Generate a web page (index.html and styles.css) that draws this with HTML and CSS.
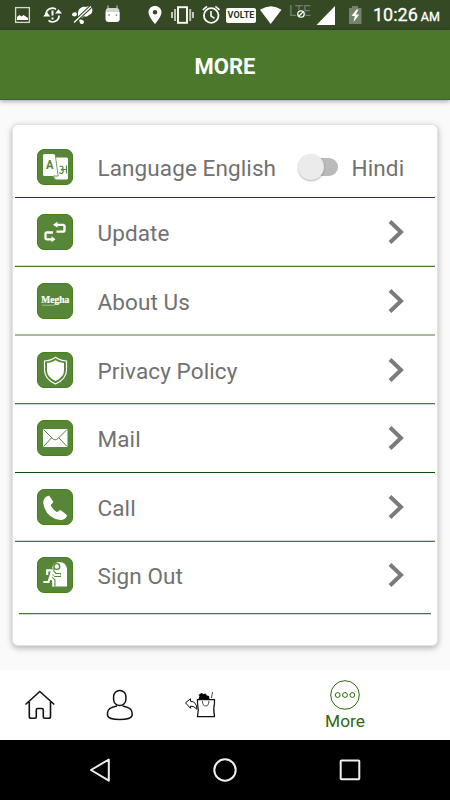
FILE: index.html
```html
<!DOCTYPE html>
<html lang="en">
<head>
<meta charset="utf-8">
<title>More</title>
<link rel="stylesheet" href="styles.css">
</head>
<body>
<div class="screen">
  <div class="status">
    <svg width="40" height="30" viewBox="0 0 40 30"><rect x="15.600" y="7.600" width="13.800" height="14.800" fill="none" stroke="#d5dbcf" stroke-width="1.300"/><path d="M17 20v-3l2.500-2 2 1.500 2-1.500 4.500 3v2z" fill="#fff"/></svg>
    <svg width="28" height="30" viewBox="40 0 28 30"><g fill="none" stroke="#fff" stroke-width="1.700"><path d="M46 14a6.300 6.300 0 0 1 10-4.600M59 15.500a6.300 6.300 0 0 1-10.500 4.800" /><path d="M52.500 10.500v5M52.500 17.500v2" stroke-width="2"/></g><path d="M55 13.500h7l-3.600-4.300zM43.200 16.500h7.200l-3.700-4.500z" fill="#fff"/></svg>
    <svg width="32" height="30" viewBox="68 0 32 30"><path d="M78 12c1-5 6-6 8-5 2-1 5-1 6 1 1 3 0 6-3 7-2 2-4 2-5 1l-2 2-4-1zM73 13c1-1 4-1 4 1s-2 3-4 2-1-2 0-3zM79 20c2-1 5 0 5 2s-3 3-4 1z" fill="#fff"/><path d="M74 22.500 91 6.500" stroke="#364925" stroke-width="3.500"/><path d="M74 22.500 91 6.500" stroke="#fff" stroke-width="1.300"/></svg>
    <svg width="40" height="30" viewBox="100 0 40 30"><path d="M108 5.500v4M117 5.500v4" stroke="#b8c0b0" stroke-width="1.200"/><path d="M105.500 12q0-4 3-4h8q3 0 3 4z" fill="#d2d7cd"/><path d="M105.500 12h14.200v7q0 3-3 3H109q-3.500 0-3.500-3z" fill="#fff"/><circle cx="109" cy="15" r=".8" fill="#536348"/><circle cx="116.400" cy="15" r=".8" fill="#536348"/></svg>
    <svg width="29" height="30" viewBox="140 0 29 30"><path fill-rule="evenodd" d="M155 6c-3.700 0-6.500 2.700-6.500 6.300C148.500 17 155 24 155 24s6.500-7 6.500-11.700C161.500 8.700 158.700 6 155 6zm0 4a2.300 2.300 0 1 1 0 4.600 2.300 2.300 0 0 1 0-4.600z" fill="#fff"/></svg>
    <svg width="29" height="30" viewBox="169 0 29 30"><rect x="178" y="7.200" width="9" height="15.600" fill="none" stroke="#fff" stroke-width="1.900"/><path d="M175 9v12M190.200 9v12" stroke="#b9c2b1" stroke-width="2"/><path d="M172 12v6M193 12v6" stroke="#fff" stroke-width="1.400"/></svg>
    <svg width="27" height="30" viewBox="198 0 27 30"><circle cx="211.200" cy="15.500" r="7.300" fill="none" stroke="#fff" stroke-width="1.800"/><path d="M211 11v5l3.500 2.300M202.800 9.800l4.200-3.500M219.600 9.800l-4.200-3.500" fill="none" stroke="#fff" stroke-width="1.600"/></svg>
    <span class="volte">VOLTE</span>
    <svg width="29" height="30" viewBox="256 0 29 30"><path d="M260 9.800q11-7.200 21.500 0L270.700 24z" fill="#fff"/></svg>
    <svg width="28" height="30" viewBox="285 0 28 30"><text x="289" y="15.500" class="lte">LTE</text><circle cx="301" cy="14" r="4.600" fill="#364925"/><circle cx="301" cy="14" r="3.200" fill="none" stroke="#fff" stroke-width="1.300"/><path d="m299 16 4-4" stroke="#fff" stroke-width="1.200"/></svg>
    <svg width="29" height="30" viewBox="313 0 29 30"><path d="M335 6v19h-18.500z" fill="#fff"/></svg>
    <svg width="31" height="30" viewBox="342 0 31 30"><path d="M349 8h3V6h6v2h3.500v16H349z" fill="#76836b"/><path d="m356.500 9.500-5 6.500h3.300l-1.300 6 5.800-7.500h-3.500l2.700-5z" fill="#fff"/></svg>
    <div class="clock">10:26<span>AM</span></div>
  </div>
  <header class="header">MORE</header>
  <main class="main">
    <section class="card">
      <div class="row row-first">
        <svg class="icon" viewBox="1 1 34 34"><path d="M17 8.500h12.500q1.500 0 1.500 1.500v19q0 1.500-1.500 1.500H18l-2-3z" fill="#fff"/><path d="M7.500 5H16q2 0 2.400 2l2.800 20H7.500q-1.500 0-1.500-1.500v-19Q6 5 7.500 5z" fill="#fff"/><path d="m18.400 7 2.800 20h-4.700l2 3.500" fill="none" stroke="#578638" stroke-width=".8"/><text x="9" y="19.500" class="letter" textLength="7.500" lengthAdjust="spacingAndGlyphs">A</text><path d="M22.500 17.500q4-1 3.500 1.700-.2 1.500-2.200 1.500 3 0 2.300 2.300-.7 2.200-3.800.8M26 20.500h3M29.500 16.500v8" fill="none" stroke="#578638" stroke-width="1.200"/></svg>
        <span class="label">Language English</span>
        <span class="switch"><i></i></span>
        <span class="label hindi">Hindi</span>
      </div>
      <div class="row above">
        <svg class="icon" viewBox="1 1 34 34"><g fill="none" stroke="#fff" stroke-width="2.300"><path d="M18.500 10.800H26q1.500 0 1.500 1.500v3.900q0 1.500-1.500 1.500h-6.500M16 18.500h-6q-1.500 0-1.500 1.500v3.800q0 1.500 1.500 1.500h6"/></g><path d="m16 10.800 4.500-3v6zM18.500 25.300l-4-3v6z" fill="#fff"/></svg>
        <span class="label">Update</span><svg class="chev" viewBox="0 0 16 24"><path d="m2 1.500 11 10.500L2 22.500"/></svg>
      </div>
      <div class="row soft">
        <svg class="icon" viewBox="1 1 34 34"><text x="4.300" y="19.800" class="megha" textLength="28" lengthAdjust="spacingAndGlyphs">Megha</text><path d="M5 22.200h13" stroke="#d6e2cd" stroke-width=".6"/></svg>
        <span class="label">About Us</span><svg class="chev" viewBox="0 0 16 24"><path d="m2 1.500 11 10.500L2 22.500"/></svg>
      </div>
      <div class="row below">
        <svg class="icon" viewBox="1 1 34 34"><path d="M18.500 5.300q4.500 3.400 11 3.700v9q0 9-11 14-11-5-11-14V9q6.500-.3 11-3.700z" fill="none" stroke="#fff" stroke-width="1.200"/><path d="M18.500 8.200q4 2.600 8.500 2.900v7.400q0 6.500-8.500 10.500-8.500-4-8.500-10.500v-7.400q4.500-.3 8.500-2.900z" fill="#fff"/></svg>
        <span class="label">Privacy Policy</span><svg class="chev" viewBox="0 0 16 24"><path d="m2 1.500 11 10.500L2 22.500"/></svg>
      </div>
      <div class="row dark">
        <svg class="icon" viewBox="1 1 34 34"><path d="M6 9h24.500v18H6z" fill="#fff"/><path d="m6.500 9.500 8.500 8.500q3.200 3.600 6.500 0L30 9.500M6.500 26.500l8-8.500M30 26.500 22 18" fill="none" stroke="#578638" stroke-width="1"/></svg>
        <span class="label">Mail</span><svg class="chev" viewBox="0 0 16 24"><path d="m2 1.500 11 10.500L2 22.500"/></svg>
      </div>
      <div class="row above">
        <svg class="icon" viewBox="1 1 34 34"><path d="M7.500 9.500q2-3 4.700-2.700l3.800 5.400q.5 1-.5 2l-1.800 1.900q.8 3.500 6.300 7.100l2.200-1.700q1-.7 2 0l5.300 4.200q.7.800.3 1.500-2 4-6.500 3.800Q9 29 6.300 14.500q-.3-3 1.200-5z" fill="#fff"/></svg>
        <span class="label">Call</span><svg class="chev" viewBox="0 0 16 24"><path d="m2 1.500 11 10.500L2 22.500"/></svg>
      </div>
      <div class="row row-last below">
        <svg class="icon" viewBox="1 1 34 34"><path d="M15 29.500V12q1-7 7.500-7T30 12v17.500z" fill="#fff"/><circle cx="19.800" cy="9.500" r="2.900" fill="#fff" stroke="#578638" stroke-width="1.400"/><path d="M10 18v-4.500h5l-2.500 7L11 25H6M15 14l3.500 4H24M13.500 21l3 2.500v6" fill="none" stroke="#578638" stroke-width="4"/><path d="M10.200 18v-4.600h5L13 20.500 11.500 25H6.300M15 13.500l-1 7M15.500 15l2.500 3h5.500M13.500 21l2.800 2.500v6" fill="none" stroke="#fff" stroke-width="2.200"/></svg>
        <span class="label">Sign Out</span><svg class="chev" viewBox="0 0 16 24"><path d="m2 1.500 11 10.500L2 22.500"/></svg>
      </div>
    </section>
  </main>
  <nav class="tabs">
    <svg width="80" height="70" viewBox="0 670 80 70"><path d="M25.500 704.500 39.800 691.500 54.300 704.500M29.300 702v14.500q0 1.800 1.700 1.800h4q1.300 0 1.300-1.500V710q0-1.500 1.500-1.500h4q1.500 0 1.500 1.500v6.800q0 1.500 1.500 1.500h4q1.700 0 1.700-1.800V702" fill="none" stroke="#111" stroke-width="1.600"/></svg>
    <svg width="80" height="70" viewBox="80 670 80 70"><g fill="none" stroke="#111" stroke-width="1.500"><rect x="113.600" y="690.500" width="12.300" height="15" rx="6" /><path d="M117 706q-9.500 1.700-9.500 7v2.500q1 4 12.300 4t12.300-4V713q0-5.300-9.500-7"/></g></svg>
    <svg width="90" height="70" viewBox="160 670 90 70"><path d="M197.500 699.600h17v3.500q-1.500 6 0 13.500h-17q1.500-7 0-13.500z" fill="none" stroke="#111" stroke-width="1.200"/><path d="M202.500 701q0 5 3.200 5t3.200-5M211.500 698l1-6" fill="none" stroke="#333" stroke-width=".9"/><path d="m198.500 699 1-3-1-1 3-2 2 1 2-.5 1.500 2 2 .5.500 3z" fill="#000"/><path d="m185.500 702.800 5-4v2.500q6 0 6.500 8-3-3.500-6.500-3.200v2.200z" fill="none" stroke="#111"/></svg>
    <div class="tab-active">
      <svg width="32" height="32" viewBox="0 0 32 32"><g fill="none" stroke="#2d6a0b"><circle cx="16" cy="16" r="14.300"/><circle cx="8.700" cy="16" r="2.400"/><circle cx="16" cy="16" r="2.400"/><circle cx="23.300" cy="16" r="2.400"/></g></svg>
      <span>More</span>
    </div>
  </nav>
  <footer class="system">
    <svg width="450" height="60" viewBox="0 740 450 60"><g fill="none" stroke="#eee" stroke-width="2"><path d="M108.800 759.500v21.200L91 770z" stroke-linejoin="round"/><circle cx="225" cy="770" r="10.700"/><rect x="340.700" y="760.500" width="18.600" height="18.800" rx=".8"/></g></svg>
  </footer>
</div>
</body>
</html>
```
FILE: styles.css
```css
* { box-sizing: border-box; }
body { margin: 0; font-family: Roboto, "Liberation Sans", sans-serif; background: #fafafa; }
svg { display: block; flex: none; }
.screen { width: 450px; height: 800px; display: flex; flex-direction: column; overflow: hidden; }
.status { height: 30px; flex: none; background: #364925; display: flex; align-items: center; }
.volte { width: 30px; height: 15px; margin-left: 1px; flex: none; border-radius: 2px; background: #fff; color: #29391b; font-size: 9px; font-weight: 700; line-height: 15.500px; text-align: center; letter-spacing: .1px; }
.lte { font-size: 14px; fill: #728067; }
.clock { color: #fff; font-size: 18px; font-weight: 400; -webkit-text-stroke: .3px #fff; line-height: 33px; display: flex; align-items: baseline; white-space: nowrap; }
.clock span { font-size: 12.500px; margin-left: 3px; }
.header { height: 70px; flex: none; background: #4b782a; border-bottom: 1px solid #376a14; color: #fff; font-size: 22px; font-weight: 700; line-height: 73px; text-align: center; box-shadow: 0 1px 5px rgba(0,0,0,.4); }
.main { flex: 1; padding: 24px 12px 0; }
.card { width: 426px; height: 522px; padding: 0 2px; border-radius: 6px; background: #fff; border: 1px solid #e3e3e3; box-shadow: 0 2px 6px rgba(0,0,0,.3); }
.row { height: 69px; display: flex; align-items: center; padding: 0 31px 1px 22px; border-bottom: 1px solid #477b2b; }
.row-first { height: 73px; padding-top: 13px; border-color: #0c500c; }
.above { box-shadow: inset 0 -1px #d0dccb; }
.soft { border-color: #a5b99b; box-shadow: inset 0 -1px #a5b99b; }
.below { border-color: #d0dccb; box-shadow: inset 0 -1px #477b2b; }
.dark { height: 68px; border-color: #0c500c; }
.row-last { height: 73px; margin: 0 4px; padding: 0 27px 6px 18px; }
.icon { width: 36px; height: 36px; border-radius: 7px; background: #578638; border: 1px solid #468016; }
.label { margin-left: 24.500px; color: #717171; font-size: 22.500px; letter-spacing: .1px; white-space: nowrap; line-height: 28px; padding-top: 2px; }
.chev { width: 16px; height: 26px; margin-left: auto; }
.chev path { fill: none; stroke: #7b7b7b; stroke-width: 4; }
.switch { width: 40px; height: 26px; margin-left: 22px; flex: none; padding: 4px 0 4px 8px; }
.switch::before { content: ""; display: block; height: 18px; border-radius: 9px; background: #bababa; }
.switch i { display: block; width: 26px; height: 26px; margin: -22px 0 0 -8px; border-radius: 50%; background: #ebebeb; position: relative; box-shadow: 0 1px 2px rgba(0,0,0,.3); }
.hindi { margin-left: 13.500px; }
.letter { font-size: 13px; font-weight: 700; fill: #578638; }
.megha { font: 700 9.500px "Liberation Serif", serif; fill: #fff; stroke: #fff; stroke-width: .2px; }
.tabs { height: 70px; flex: none; background: #fff; display: flex; }
.tab-active { width: 190px; flex: none; display: flex; flex-direction: column; align-items: center; padding-top: 9px; color: #2d6a0b; font-size: 17.300px; line-height: 21px; }
.system { height: 60px; flex: none; background: #000; }
```
